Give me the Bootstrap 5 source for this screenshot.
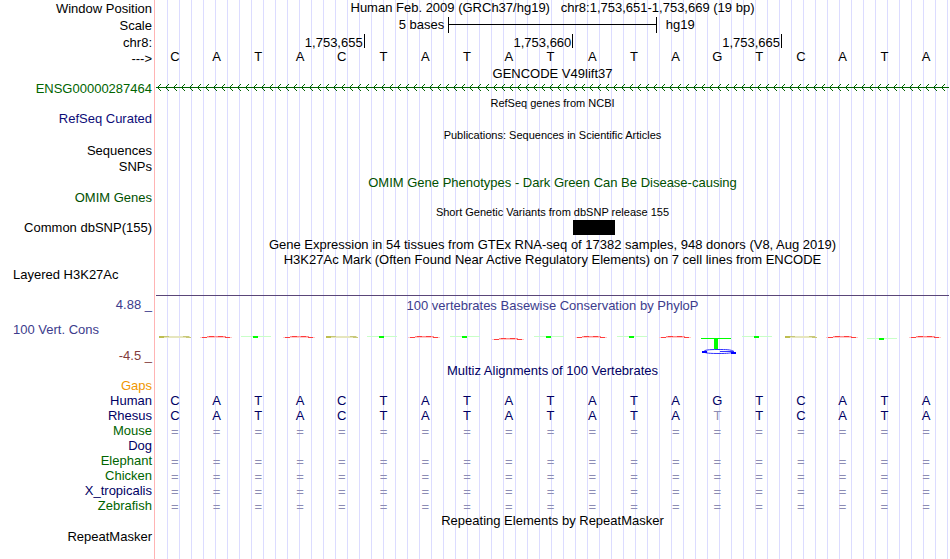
<!DOCTYPE html>
<html lang="en">
<head>
<meta charset="utf-8">
<meta name="viewport" content="width=device-width, initial-scale=1">
<title>Genome Browser hg19 chr8:1,753,651-1,753,669</title>
<link href="https://cdn.jsdelivr.net/npm/bootstrap@5.3.0/dist/css/bootstrap.min.css" rel="stylesheet">
<style>
body { font-family: "Liberation Sans", Arial, sans-serif; font-size: 13px; line-height: 15px; color: #000; background: #fff; }
.track-row { min-height: 15px; }
.h16 { min-height: 16px; line-height: 16px; }
.h17 { min-height: 17px; line-height: 17px; }
.name { flex: 0 0 155px; border-right: 1px solid #ffb4b4; margin-right: 1px; padding-right: 2px; text-align: right; white-space: nowrap; }
.name.start { text-align: left; padding-left: 13px; }
.plot { flex: 1 1 0; min-width: 0; margin-right: 1px; white-space: nowrap; background: repeating-linear-gradient(to right, transparent 0 11px, #dcdcff 11px 12px); }
.fine { font-size: 11px; }
.navy { color: #0c0c78; }
.deep { color: #000064; }
.green { color: #006400; }
.forest { color: #005000; }
.slate { color: #3c3c8c; }
.maroon { color: #823c3c; }
.amber { color: #f09600; }
.faded { color: #8c8cb4; }
.scale-side { width: 36.85%; }
.scale-side.after { padding-left: 9px; }
.ruler { width: 26.3%; height: 16px; border: solid #000; border-width: 0 1px; background: linear-gradient(#000, #000) 0 7px / 100% 1px no-repeat; }
.coord { width: 26.316%; height: 14px; border-right: 1px solid #000; padding-right: 1px; line-height: 17px; text-align: right; }
.seq > * { flex: 1 1 0; padding-right: 4px; text-align: center; }
.seq.pairs > * { color: #8c8cb4; line-height: 18px; height: 15px; }
.bases { line-height: 11px; }
.block-offset { width: 52.632%; }
.block { width: 5.263%; height: 15px; background: #000; }
.histone { min-height: 28px; }
.signal { border-top: 1px solid #5a4678; }
.level-mid { height: 34px; padding: 8px 0 0 13px; }
.phylo-title { height: 19px; line-height: 19px; }
.logo { flex: 1 1 0; min-width: 0; height: 46px; overflow: visible; }
</style>
<script src="https://cdn.jsdelivr.net/npm/bootstrap@5.3.0/dist/js/bootstrap.bundle.min.js"></script>
</head>
<body>
<svg width="0" height="0" class="position-absolute" aria-hidden="true">
  <symbol id="logo-C" viewBox="0 0 42 46" overflow="visible">
    <rect x="3" y="21" width="31" height="2" fill="#e6e6be"/><rect x="3" y="21" width="5" height="2" fill="#bebe50"/><rect x="8" y="21" width="5" height="1" fill="#c8c878"/><rect x="27" y="21" width="6" height="1" fill="#c8c878"/><rect x="30" y="22" width="5" height="1" fill="#c8c878"/>
  </symbol>
  <symbol id="logo-A" viewBox="0 0 42 46" overflow="visible">
    <rect x="9" y="21" width="19" height="1" fill="#ff8c8c"/><rect x="11" y="21" width="5" height="1" fill="#ff3c3c"/><rect x="20" y="21" width="5" height="1" fill="#ff3c3c"/><rect x="2" y="22" width="32" height="1" fill="#ffc8c8"/><rect x="4" y="22" width="5" height="1" fill="#ff3c3c"/><rect x="27" y="22" width="5" height="1" fill="#ff3c3c"/>
  </symbol>
  <symbol id="logo-T" viewBox="0 0 42 46" overflow="visible">
    <rect x="2" y="21" width="30" height="1" fill="#c8ffc8"/><rect x="14" y="21" width="5" height="2" fill="#00ff00"/>
  </symbol>
  <symbol id="logo-G" viewBox="0 0 42 46" overflow="visible">
    <rect x="2" y="23" width="30" height="1" fill="#00ff00"/><rect x="15" y="24" width="4" height="10" fill="#00ff00"/>
    <path d="M35 36.500C32 34.500 27 34.500 19 34.500C10 34.500 5 35 5 36.500C5 38.300 12 38.500 20 38.500C28 38.500 32 38.200 34 37M21 36.500H35" fill="none" stroke="#3232ff"/>
    <rect x="3" y="36" width="5" height="2" fill="#0000ff"/><rect x="32" y="37" width="5" height="2" fill="#0000ff"/>
  </symbol>
</svg>

<main class="min-vh-100 d-flex flex-column">
  <div class="track-row h17 d-flex"><div class="name">Window Position</div><div class="plot text-center h16">Human Feb. 2009 (GRCh37/hg19) &nbsp; chr8:1,753,651-1,753,669 (19 bp)</div></div>
  <div class="track-row h17 d-flex"><div class="name">Scale</div>
    <div class="plot d-flex h16"><div class="scale-side text-end pe-1">5 bases</div><div class="ruler"></div><div class="scale-side after">hg19</div></div></div>
  <div class="track-row h17 d-flex"><div class="name">chr8:</div>
    <div class="plot d-flex"><div class="coord">1,753,655</div><div class="coord">1,753,660</div><div class="coord">1,753,665</div></div></div>
  <div class="track-row d-flex"><div class="name">---&gt;</div><div class="plot seq bases d-flex" data-seq="CATACTATATATAGTCATA"></div></div>
  <div class="track-row d-flex"><div class="name"></div><div class="plot text-center">GENCODE V49lift37</div></div>
  <div class="track-row d-flex"><div class="name green">ENSG00000287464</div>
    <div class="plot"><svg class="d-block w-100" height="15" role="img" aria-label="Transcript on the reverse strand"><defs><pattern id="strand" width="8" height="15" patternUnits="userSpaceOnUse"><path d="M0 6h8v1H0zM1 6h1v1H1zM2 5h1v1H2zM3 4h1v1H3zM4 3h1v1H4zM2 7h1v1H2zM3 8h1v1H3zM4 9h1v1H4z" fill="#006400" shape-rendering="crispEdges"/></pattern></defs><rect width="100%" height="15" fill="url(#strand)"/></svg></div></div>
  <div class="track-row d-flex"><div class="name"></div><div class="plot fine text-center">RefSeq genes from NCBI</div></div>
  <div class="track-row h16 d-flex"><div class="name navy">RefSeq Curated</div><div class="plot"></div></div>
  <div class="track-row h16 d-flex"><div class="name"></div><div class="plot fine text-center">Publications: Sequences in Scientific Articles</div></div>
  <div class="track-row h16 d-flex"><div class="name">Sequences</div><div class="plot"></div></div>
  <div class="track-row h16 d-flex"><div class="name">SNPs</div><div class="plot"></div></div>
  <div class="track-row d-flex"><div class="name"></div><div class="plot forest text-center">OMIM Gene Phenotypes - Dark Green Can Be Disease-causing</div></div>
  <div class="track-row d-flex"><div class="name forest">OMIM Genes</div><div class="plot"></div></div>
  <div class="track-row d-flex"><div class="name"></div><div class="plot fine text-center">Short Genetic Variants from dbSNP release 155</div></div>
  <div class="track-row h17 d-flex"><div class="name h16">Common dbSNP(155)</div><div class="plot d-flex"><div class="block-offset"></div><div class="block"></div></div></div>
  <div class="track-row d-flex"><div class="name"></div><div class="plot text-center">Gene Expression in 54 tissues from GTEx RNA-seq of 17382 samples, 948 donors (V8, Aug 2019)</div></div>
  <div class="track-row d-flex"><div class="name"></div><div class="plot text-center">H3K27Ac Mark (Often Found Near Active Regulatory Elements) on 7 cell lines from ENCODE</div></div>
  <div class="track-row histone d-flex"><div class="name start">Layered H3K27Ac</div><div class="plot"></div></div>

  <section class="d-flex">
    <div class="name slate d-flex flex-column">
      <div class="phylo-title">4.88 _</div>
      <div class="level-mid text-start">100 Vert. Cons</div>
      <div class="maroon">-4.5 _</div>
    </div>
    <div class="plot signal">
      <div class="phylo-title slate text-center">100 vertebrates Basewise Conservation by PhyloP</div>
      <div class="d-flex" id="logos"></div>
    </div>
  </section>

  <div class="track-row d-flex"><div class="name"></div><div class="plot deep text-center">Multiz Alignments of 100 Vertebrates</div></div>
  <div class="track-row d-flex"><div class="name amber">Gaps</div><div class="plot"></div></div>
  <div class="track-row d-flex"><div class="name deep">Human</div><div class="plot seq deep d-flex" data-seq="CATACTATATATAGTCATA"></div></div>
  <div class="track-row d-flex"><div class="name deep">Rhesus</div><div class="plot seq deep d-flex" data-seq="CATACTATATATAtTCATA"></div></div>
  <div class="track-row d-flex"><div class="name green">Mouse</div><div class="plot seq pairs d-flex" data-seq="==================="></div></div>
  <div class="track-row d-flex"><div class="name deep">Dog</div><div class="plot"></div></div>
  <div class="track-row d-flex"><div class="name green">Elephant</div><div class="plot seq pairs d-flex" data-seq="==================="></div></div>
  <div class="track-row d-flex"><div class="name green">Chicken</div><div class="plot seq pairs d-flex" data-seq="==================="></div></div>
  <div class="track-row d-flex"><div class="name deep">X_tropicalis</div><div class="plot seq pairs d-flex" data-seq="==================="></div></div>
  <div class="track-row d-flex"><div class="name green">Zebrafish</div><div class="plot seq pairs d-flex" data-seq="==================="></div></div>
  <div class="track-row h16 d-flex"><div class="name"></div><div class="plot text-center">Repeating Elements by RepeatMasker</div></div>
  <div class="track-row flex-fill d-flex"><div class="name">RepeatMasker</div><div class="plot"></div></div>
</main>

<script>
// One cell per base; a lower-case base is a mismatch and is drawn faded.
document.querySelectorAll('[data-seq]').forEach(function (row) {
  Array.from(row.dataset.seq).forEach(function (base) {
    var cell = document.createElement('span');
    cell.textContent = base.toUpperCase();
    if (/[a-z]/.test(base)) cell.className = 'faded';
    row.appendChild(cell);
  });
});
// Conservation logo per base; negative scores hang below the zero line.
var below = { 8: 2, 17: 2 };
document.getElementById('logos').innerHTML = Array.from('CATACTATATATAGTCATA').map(function (base, i) {
  return '<svg class="logo" aria-hidden="true"><use href="#logo-' + base + '" width="42" height="46" y="' + (below[i] || 0) + '"/></svg>';
}).join('');
</script>
</body>
</html>
